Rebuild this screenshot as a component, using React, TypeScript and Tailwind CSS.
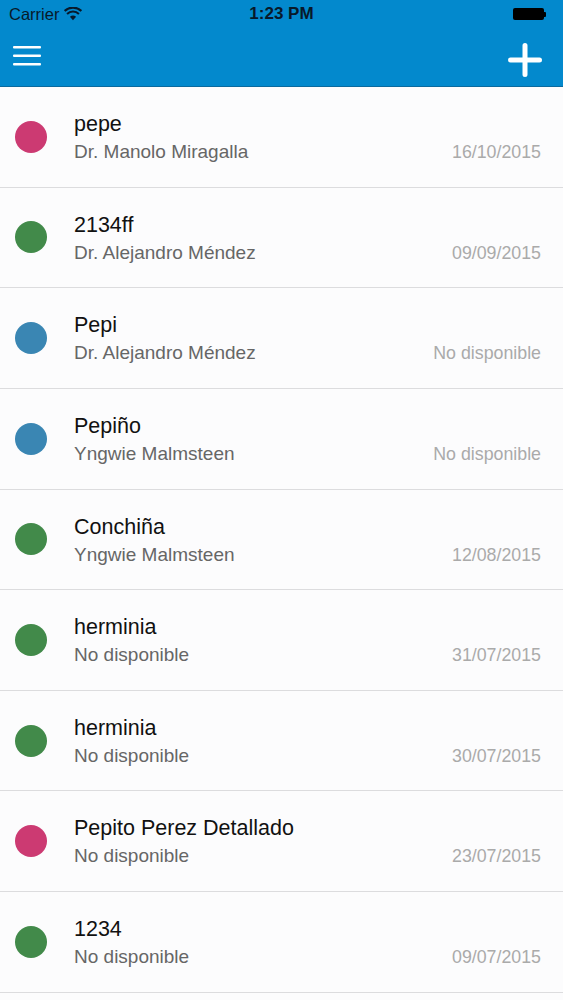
import React from 'react';

interface Visit {
  name: string;
  doctor: string;
  date: string;
  color: string;
}

const visits: Visit[] = [
  { name: 'pepe', doctor: 'Dr. Manolo Miragalla', date: '16/10/2015', color: 'bg-[#cc3a72]' },
  { name: '2134ff', doctor: 'Dr. Alejandro Méndez', date: '09/09/2015', color: 'bg-[#428a4a]' },
  { name: 'Pepi', doctor: 'Dr. Alejandro Méndez', date: 'No disponible', color: 'bg-[#3a86b3]' },
  { name: 'Pepiño', doctor: 'Yngwie Malmsteen', date: 'No disponible', color: 'bg-[#3a86b3]' },
  { name: 'Conchiña', doctor: 'Yngwie Malmsteen', date: '12/08/2015', color: 'bg-[#428a4a]' },
  { name: 'herminia', doctor: 'No disponible', date: '31/07/2015', color: 'bg-[#428a4a]' },
  { name: 'herminia', doctor: 'No disponible', date: '30/07/2015', color: 'bg-[#428a4a]' },
  { name: 'Pepito Perez Detallado', doctor: 'No disponible', date: '23/07/2015', color: 'bg-[#cc3a72]' },
  { name: '1234', doctor: 'No disponible', date: '09/07/2015', color: 'bg-[#428a4a]' },
];

const App = () => {
  return (
    <div className="w-[563px] h-[1000px] overflow-hidden bg-[#fcfcfd] font-['Liberation_Sans',Arial,sans-serif]">
      {/* Header: status bar + nav */}
      <header className="bg-[#0389cd] border-b border-[#0b6a9e]">
        <div className="h-[28px] grid grid-cols-3 items-center px-[9px] text-[16.5px] text-[#08192a]">
          <div className="flex items-center gap-[5px]">
            <span>Carrier</span>
            <svg width="18" height="14" viewBox="0 0 17 13">
              <path d="M8.5 12.5 L5.6 9.2 A4.3 4.3 0 0 1 11.4 9.2 Z" fill="#08192a" />
              <path d="M2.9 6.4 A8 8 0 0 1 14.1 6.4" stroke="#08192a" strokeWidth="2" fill="none" />
              <path d="M0.6 3.6 A11.5 11.5 0 0 1 16.4 3.6" stroke="#08192a" strokeWidth="2" fill="none" />
            </svg>
          </div>
          <div className="text-center font-bold text-[17px] whitespace-nowrap">1:23 PM</div>
          <div className="flex justify-end items-center pr-[8px]">
            <div className="w-[31px] h-[12px] bg-black rounded-[2px]" />
            <div className="w-[2px] h-[5px] bg-black rounded-r-[1px]" />
          </div>
        </div>
        <div className="h-[58px] flex items-center justify-between pl-[13px] pr-[21px]">
          <svg width="28" height="22" viewBox="0 0 28 22" className="mb-[4px]">
            <rect x="0" y="2" width="28" height="2.6" rx="1" fill="#fff" />
            <rect x="0" y="10.5" width="28" height="2.6" rx="1" fill="#fff" />
            <rect x="0" y="19" width="28" height="2.6" rx="1" fill="#fff" />
          </svg>
          <svg width="34" height="34" viewBox="0 0 34 34" className="mt-[5px]">
            <path d="M17 2.5 V31.5 M2.5 17 H31.5" stroke="#fff" strokeWidth="5" strokeLinecap="round" />
          </svg>
        </div>
      </header>

      {/* Visit list */}
      <ul>
        {visits.map((v, i) => (
          <li
            key={i}
            className="h-[100.625px] flex items-center border-b border-[#dcdcde] bg-[#fcfcfd]"
          >
            <div className={`w-[32px] h-[32px] rounded-full shrink-0 ml-[15px] ${v.color}`} />
            <div className="flex-1 self-stretch flex flex-col pt-[24px] pl-[27px] pr-[22px]">
              <div className="text-[21.5px] leading-[26px] text-[#111]">{v.name}</div>
              <div className="mt-[4px] flex items-baseline justify-between">
                <span className="text-[19px] leading-[22px] text-[#666]">{v.doctor}</span>
                <span className="text-[17.8px] leading-[22px] text-[#aaa]">{v.date}</span>
              </div>
            </div>
          </li>
        ))}
      </ul>
    </div>
  );
};

export default App;
